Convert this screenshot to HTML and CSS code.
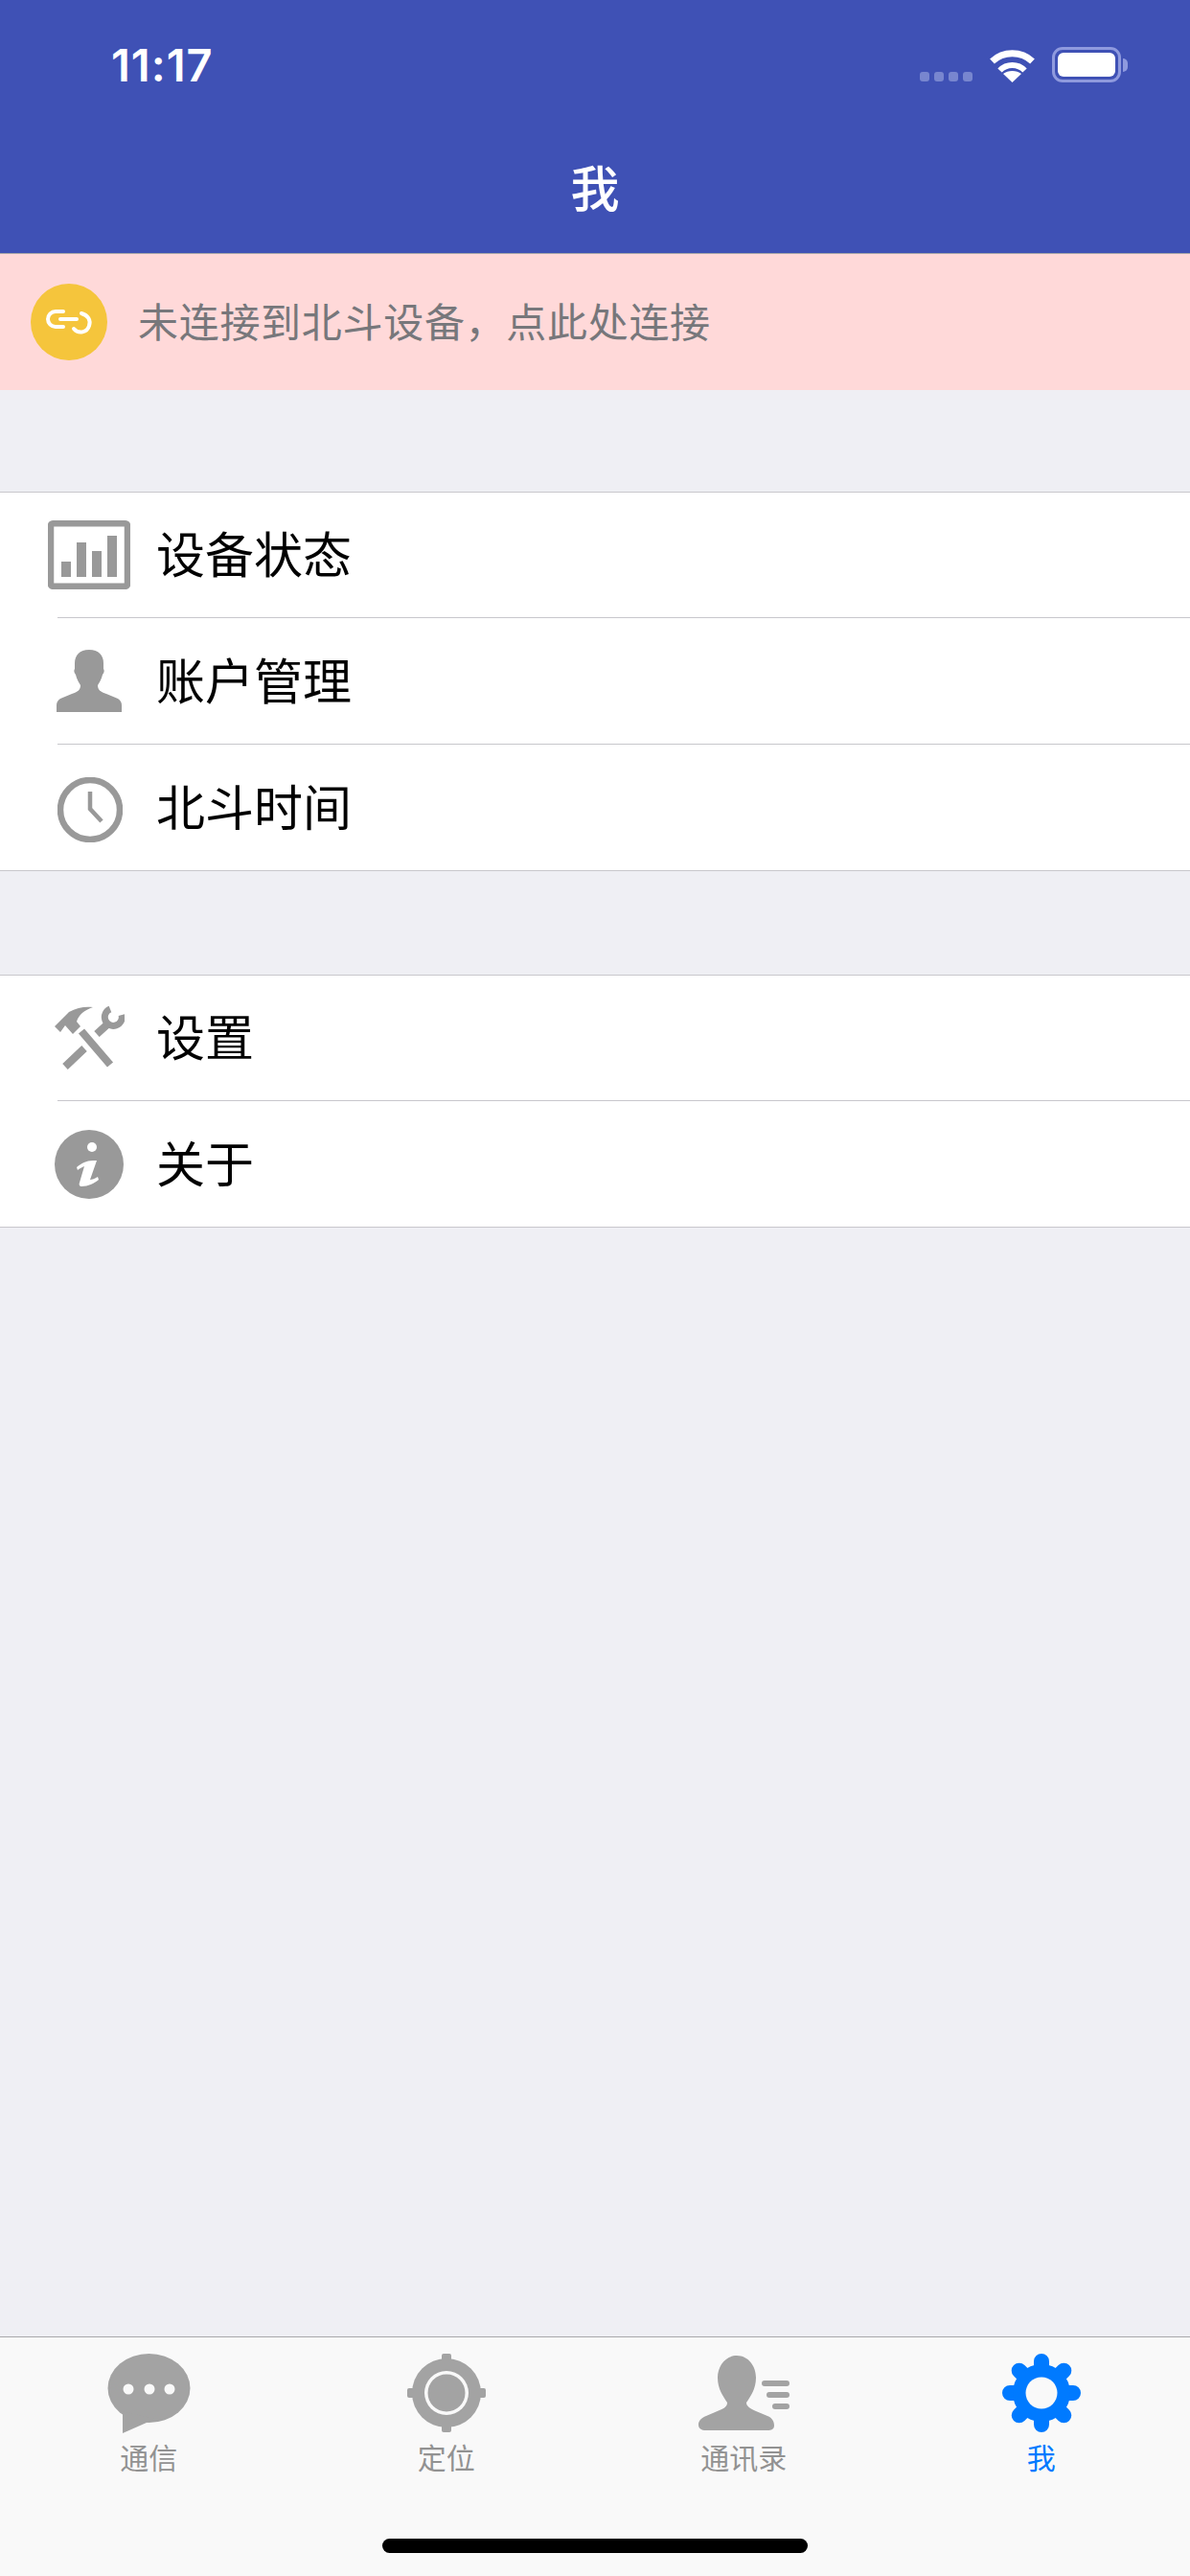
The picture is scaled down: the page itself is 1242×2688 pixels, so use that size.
FILE: index.html
```html
<!DOCTYPE html>
<html lang="zh-CN">
<head>
    <meta charset="utf-8">
    <title>我</title>
    <link rel="stylesheet" href="styles.css">
</head>
<body>
<div class="page">
    <header class="top">
        <!-- start status bar -->
        <div class="status">
            <span class="status-time">11:17</span>
            <div class="status-right">
                <div class="signal"><i></i><i></i><i></i><i></i></div>
                <svg class="wifi" width="49" height="36" viewBox="0 0 49 36">
                    <path d="M3.5 14A31 31 0 0 1 45.5 14" fill="none" stroke="#fff" stroke-width="7"/>
                    <path d="M11.5 23.5A18 18 0 0 1 37.5 23.5" fill="none" stroke="#fff" stroke-width="6"/>
                    <path d="M24.5 36L15 27C20 23 29 23 34 27Z" fill="#fff"/>
                </svg>
                <div class="battery"><div class="battery-fill"></div></div>
                <div class="battery-cap"></div>
            </div>
        </div>
        <!-- end status bar -->
        <h1 class="title">我</h1>
    </header>

    <div class="banner">
        <svg width="80" height="80" viewBox="0 0 80 80">
            <circle cx="40" cy="40" r="40" fill="#f5c53c"/>
            <path d="M34 29H26A8 8 0 0 0 26 45H34M31 37H48M53 31C60 33 63 38 61 44C59 51 50 53 45 47" fill="none" stroke="#fff" stroke-width="4" stroke-linecap="round"/>
        </svg>
        <span class="banner-text">未连接到北斗设备，点此处连接</span>
    </div>

    <main class="main">
        <section class="group group-first">
            <div class="row">
                <div class="row-icon">
                    <svg width="86" height="72" viewBox="0 0 86 72" fill="#999">
                        <rect x="3" y="3.3" width="80" height="65.5" rx="2" fill="none" stroke="#999" stroke-width="6.5"/>
                        <rect x="14" y="43" width="10" height="16"/>
                        <rect x="30" y="23" width="10" height="36"/>
                        <rect x="46" y="32" width="10" height="27"/>
                        <rect x="62" y="16" width="10" height="43"/>
                    </svg>
                </div>
                <span class="row-label">设备状态</span>
            </div>
            <div class="divider"></div>
            <div class="row">
                <div class="row-icon">
                    <svg width="68" height="66" viewBox="0 0 68 66" fill="#999">
                        <path d="M34 0C44 0 49 6 49 14L49 20C50 21 50 24 48 26C47 31 44 35 43 37C43 42 46 44 52 46L64 51C67 53 68 55 68 58L68 65L0 65L0 58C0 55 1 53 4 51L16 46C22 44 25 42 25 37C24 35 21 31 20 26C18 24 18 21 19 20L19 14C19 6 24 0 34 0Z"/>
                    </svg>
                </div>
                <span class="row-label">账户管理</span>
            </div>
            <div class="divider"></div>
            <div class="row">
                <div class="row-icon">
                    <svg class="icon-clock" width="68" height="68" viewBox="0 0 68 68" fill="none" stroke="#999">
                        <circle cx="34" cy="34" r="31" stroke-width="6.5"/>
                        <path d="M34 15V33L46 46" stroke-width="4.5"/>
                    </svg>
                </div>
                <span class="row-label">北斗时间</span>
            </div>
        </section>

        <section class="group group-second">
            <div class="row">
                <div class="row-icon">
                    <svg width="74" height="68" viewBox="0 0 74 68">
                        <path d="M1 22L16 7C24 2 34 1 41 2C32 5 26 10 24 17L28 22L20 30L12 21L7 28Z" fill="#999"/>
                        <path d="M29 27L59 62M32 45L12 64M45 30L56 20" stroke="#999" stroke-width="8" fill="none"/>
                        <path d="M59 4A9 9 0 1 0 71 10" stroke="#999" stroke-width="7" fill="none"/>
                    </svg>
                </div>
                <span class="row-label">设置</span>
            </div>
            <div class="divider"></div>
            <div class="row">
                <div class="row-icon">
                    <svg width="74" height="74" viewBox="0 0 74 74">
                        <circle cx="37" cy="37" r="36" fill="#999"/>
                        <circle cx="40" cy="19" r="5" fill="#fff"/>
                        <path d="M24 40C29 36 34 33 41 33L45 33L38 53C40 53 43 52 46 50L47 53C42 57 36 60 29 60C27 60 26 58 27 56L32 39C30 40 27 41 25 43Z" fill="#fff"/>
                    </svg>
                </div>
                <span class="row-label">关于</span>
            </div>
        </section>
    </main>

    <footer class="tabbar">
        <nav class="tabs">
            <a class="tab">
                <div class="tab-icon">
                    <svg width="87" height="83" viewBox="0 0 87 83" fill="#a3a3a3">
                        <ellipse cx="43.5" cy="36" rx="43" ry="36"/>
                        <path d="M16 60V83L50 68Z"/>
                        <g fill="#f9f9f9"><circle cx="22" cy="37" r="5.5"/><circle cx="44" cy="37" r="5.5"/><circle cx="65" cy="37" r="5.5"/></g>
                    </svg>
                </div>
                <span>通信</span>
            </a>
            <a class="tab">
                <div class="tab-icon">
                    <svg width="82" height="82" viewBox="0 0 82 82" fill="#a3a3a3">
                        <circle cx="41" cy="41" r="36"/>
                        <rect x="36" y="0" width="10" height="10" rx="2"/>
                        <rect x="36" y="72" width="10" height="10" rx="2"/>
                        <rect x="0" y="36" width="10" height="10" rx="2"/>
                        <rect x="72" y="36" width="10" height="10" rx="2"/>
                        <circle cx="41" cy="41" r="23" fill="#f9f9f9"/>
                        <circle cx="41" cy="41" r="19.5"/>
                    </svg>
                </div>
                <span>定位</span>
            </a>
            <a class="tab">
                <div class="tab-icon">
                    <svg width="95" height="80" viewBox="0 0 95 80" fill="#a3a3a3">
                        <path d="M40 1C52 1 60 12 60 24C60 36 54 44 50 50C50 54 54 56 60 59L72 64C77 66 79 70 79 74C79 78 76 79 72 79L8 79C3 79 0 77 0 73C0 69 3 66 8 64L22 58C27 56 30 54 30 50C26 44 20 36 20 24C20 12 28 1 40 1Z"/>
                        <path d="M69 30H92M74 42H92M80 54H92" stroke="#a3a3a3" stroke-width="6" stroke-linecap="round" fill="none"/>
                    </svg>
                </div>
                <span>通讯录</span>
            </a>
            <a class="tab tab-active">
                <div class="tab-icon">
                    <svg width="82" height="82" viewBox="0 0 82 82">
                        <path d="M41 8V74M8 41H74M17.7 17.7L64.3 64.3M64.3 17.7L17.7 64.3" stroke="#007aff" stroke-width="16" stroke-linecap="round" fill="none"/>
                        <circle cx="41" cy="41" r="30" fill="#007aff"/>
                        <circle cx="41" cy="41" r="16.5" fill="#f9f9f9"/>
                    </svg>
                </div>
                <span>我</span>
            </a>
        </nav>
        <div class="home-bar"></div>
    </footer>
</div>
</body>
</html>
```

FILE: styles.css
```css
html,body{margin:0;padding:0;}
body{font-family:"Noto Sans CJK SC","Noto Sans",sans-serif;background:#efeff4;}
.page{width:1242px;height:2688px;display:flex;flex-direction:column;overflow:hidden;}

/* header */
.top{height:264px;background:#3f51b5;border-bottom:1px solid #a5a5a8;color:#fff;display:flex;flex-direction:column;}
.status{display:flex;justify-content:space-between;align-items:flex-start;padding:38px 65px 0 116px;height:122px;box-sizing:border-box;}
.status-time{font-family:Inter,"Noto Sans",sans-serif;font-weight:600;font-size:47px;line-height:60px;letter-spacing:1px;}
.status-right{display:flex;align-items:flex-end;margin-top:11px;height:37px;}
.signal{display:flex;gap:5px;margin-right:17px;margin-bottom:1px;}
.signal i{display:block;width:10px;height:10px;border-radius:3px;background:#7886cf;}
.wifi{margin-right:17px;}
.battery{width:72px;height:37px;box-sizing:border-box;border:3px solid #8f9ade;border-radius:11px;padding:3px;}
.battery-fill{height:100%;background:#fff;border-radius:6px;}
.battery-cap{width:5px;height:14px;margin:0 0 11px 2px;background:#8f9ade;border-radius:0 7px 7px 0;}
.title{margin:37px 0 0;text-align:center;font-size:51px;line-height:70px;font-weight:500;}

/* banner */
.banner{height:142px;background:#ffd9d9;display:flex;align-items:center;padding-left:32px;gap:32px;}
.banner-text{font-size:42px;letter-spacing:.7px;color:#77777b;margin-bottom:6px;}

/* list */
.main{flex:1;}
.group{background:#fff;border-top:1px solid #c8c7cc;border-bottom:1px solid #c8c7cc;}
.group-first{margin-top:106px;}
.group-second{margin-top:108px;}
.row{height:131px;display:flex;align-items:center;padding-left:48px;gap:25px;}
.row:first-child{height:130px;}
.row-icon{width:90px;height:90px;display:flex;align-items:center;justify-content:center;}
.row-label{font-size:51px;color:#000;margin-bottom:6px;}
.divider{height:1px;margin-left:60px;background:#c8c7cc;}
.icon-clock{margin:4px 0 0 2px;}

/* tab bar */
.tabbar{height:250px;box-sizing:border-box;background:#f9f9f9;border-top:1px solid #a9a9ac;padding-top:16px;display:flex;flex-direction:column;}
.tabs{display:grid;grid-template-columns:repeat(4,1fr);}
.tab{display:flex;flex-direction:column;align-items:center;color:#929292;font-size:30px;line-height:30px;}
.tab-active{color:#007aff;}
.tab-icon{height:84px;display:flex;align-items:center;justify-content:center;margin-bottom:9px;}
.home-bar{align-self:center;width:444px;height:15px;margin-top:71px;border-radius:8px;background:#000;}
```
